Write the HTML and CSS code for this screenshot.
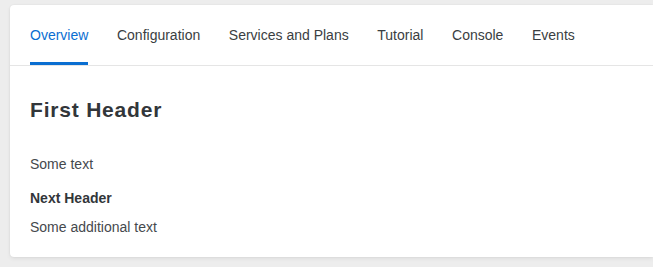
FILE: index.html
```html
<!DOCTYPE html>
<html>
<head>
<meta charset="utf-8">
<link rel="stylesheet" href="styles.css">
</head>
<body>
<div class="page">
  <div class="card">
    <nav class="tabs">
      <div class="tab active">Overview</div>
      <div class="tab">Configuration</div>
      <div class="tab">Services and Plans</div>
      <div class="tab">Tutorial</div>
      <div class="tab">Console</div>
      <div class="tab">Events</div>
    </nav>
    <div class="content">
      <h1 class="title">First Header</h1>
      <p class="text">Some text</p>
      <h2 class="subtitle">Next Header</h2>
      <p class="text">Some additional text</p>
    </div>
  </div>
</div>
</body>
</html>
```
FILE: styles.css
```css
html, body {
  margin: 0;
  padding: 0;
  background: #ededed;
  font-family: "Liberation Sans", Arial, sans-serif;
  color: #32363a;
}
.page {
  padding: 5px 0 10px 10px;
}
.card {
  background: #fff;
  border-radius: 4px 0 0 4px;
  box-shadow: 0 0 2px rgba(0,0,0,0.08), 0 2px 4px rgba(0,0,0,0.06);
  height: 252px;
  box-sizing: border-box;
}
.tabs {
  display: flex;
  gap: 28.6px;
  padding: 0 20px;
  height: 60px;
  border-bottom: 1px solid #e5e5e5;
}
.tab {
  display: flex;
  align-items: center;
  font-size: 14px;
  color: #3a3e42;
  border-bottom: 3px solid transparent;
  padding-top: 3px;
}
.tab.active {
  color: #0a6ed1;
  border-bottom-color: #0a6ed1;
}
.content {
  padding: 0 20px;
}
.title {
  margin: 0;
  padding-top: 31px;
  font-size: 21px;
  letter-spacing: 0.8px;
  font-weight: bold;
  line-height: 26px;
}
.text {
  margin: 0;
  font-size: 14px;
  line-height: 20px;
  color: #45494d;
}
.title + .text {
  margin-top: 31px;
}
.subtitle {
  margin: 14px 0 9px;
  font-size: 14px;
  font-weight: bold;
  line-height: 20px;
}
```
